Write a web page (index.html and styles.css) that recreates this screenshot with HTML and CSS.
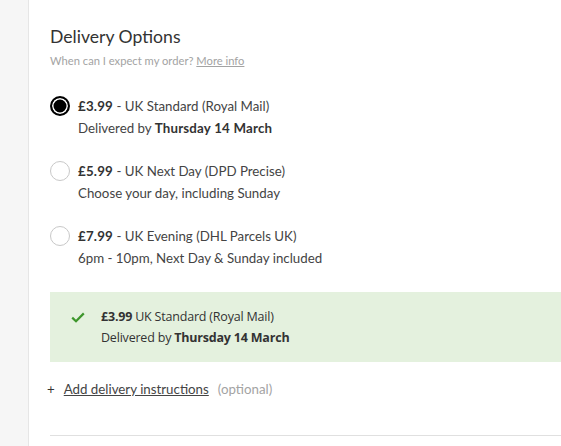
FILE: index.html
```html
<!DOCTYPE html>
<html lang="en">
<head>
<meta charset="utf-8">
<link rel="stylesheet" href="styles.css">
</head>
<body>
<div class="page">
  <aside class="rail"></aside>
  <main class="content">
    <h2 class="title">Delivery Options</h2>
    <p class="sub">When can I expect my order? <a href="#" class="more">More info</a></p>

    <div class="options">
      <label class="opt">
        <span class="radio checked"></span>
        <span class="opt-text">
          <span class="l1"><b>£3.99</b> - UK Standard (Royal Mail)</span>
          <span class="l2">Delivered by <b>Thursday 14 March</b></span>
        </span>
      </label>
      <label class="opt">
        <span class="radio"></span>
        <span class="opt-text">
          <span class="l1"><b>£5.99</b> - UK Next Day (DPD Precise)</span>
          <span class="l2">Choose your day, including Sunday</span>
        </span>
      </label>
      <label class="opt">
        <span class="radio"></span>
        <span class="opt-text">
          <span class="l1"><b>£7.99</b> - UK Evening (DHL Parcels UK)</span>
          <span class="l2">6pm - 10pm, Next Day &amp; Sunday included</span>
        </span>
      </label>
    </div>

    <div class="summary">
      <svg class="tick" width="14" height="11" viewBox="0 0 14 11"><path d="M1.2 5.6 L5 9.2 L12.8 1.4" fill="none" stroke="#3d962b" stroke-width="2.2"/></svg>
      <div class="sum-text">
        <span class="l1"><b>£3.99</b> UK Standard (Royal Mail)</span>
        <span class="l2">Delivered by <b>Thursday 14 March</b></span>
      </div>
    </div>

    <div class="add">
      <span class="plus">+</span>
      <a href="#" class="add-link">Add delivery instructions</a>
      <span class="optional">(optional)</span>
    </div>

    <hr class="rule">
  </main>
</div>
</body>
</html>
```

FILE: styles.css
```css
* { box-sizing: border-box; }
html, body { margin: 0; padding: 0; background: #fff; }
body { font-family: Lato, "Open Sans", sans-serif; color: #333; }

.page { display: flex; min-height: 446px; }
.rail { width: 29px; flex: none; background: #f6f6f6; border-right: 1px solid #e6e6e6; }
.content { flex: 1; padding: 26px 0 0 21px; }

.title { margin: 0; font-weight: 400; font-size: 17.6px; line-height: 22px; color: #333; }
.sub { margin: 6px 0 0; font-size: 11.2px; line-height: 14px; color: #a3a3a3; }
.more { color: #a3a3a3; text-decoration: underline; }

.options { display: flex; flex-direction: column; gap: 22px; margin-top: 28px; }
.opt { display: flex; align-items: flex-start; gap: 8px; }
.radio { width: 20px; height: 20px; border-radius: 50%; border: 1px solid #c8c8c8; background: #fff; flex: none; }
.radio.checked { background: #000; border: 2px solid #000; box-shadow: inset 0 0 0 1.5px #fff; }
.opt-text { display: flex; flex-direction: column; font-size: 13.3px; line-height: 21.5px; color: #444; }
.opt-text b { color: #333; font-weight: 700; letter-spacing: 0.2px; }

.summary { display: flex; align-items: flex-start; gap: 16px; margin-top: 23px; height: 70px; background: #e4f1de; padding: 14px 0 0 21px; }
.tick { margin-top: 6px; flex: none; }
.sum-text { display: flex; flex-direction: column; font-family: "Open Sans", sans-serif; font-size: 12.5px; line-height: 21px; color: #333; letter-spacing: -0.2px; }
.sum-text b { font-weight: 700; }

.add { display: flex; align-items: baseline; margin-top: 18px; font-size: 13.3px; line-height: 18px; color: #555; }
.plus { color: #333; margin-right: 9px; margin-left: -3px; }
.add-link { color: #444; text-decoration: underline; }
.optional { color: #a3a3a3; margin-left: 9px; }

.rule { margin: 37px 0 0; border: 0; border-top: 1px solid #e0e0e0; }
```
